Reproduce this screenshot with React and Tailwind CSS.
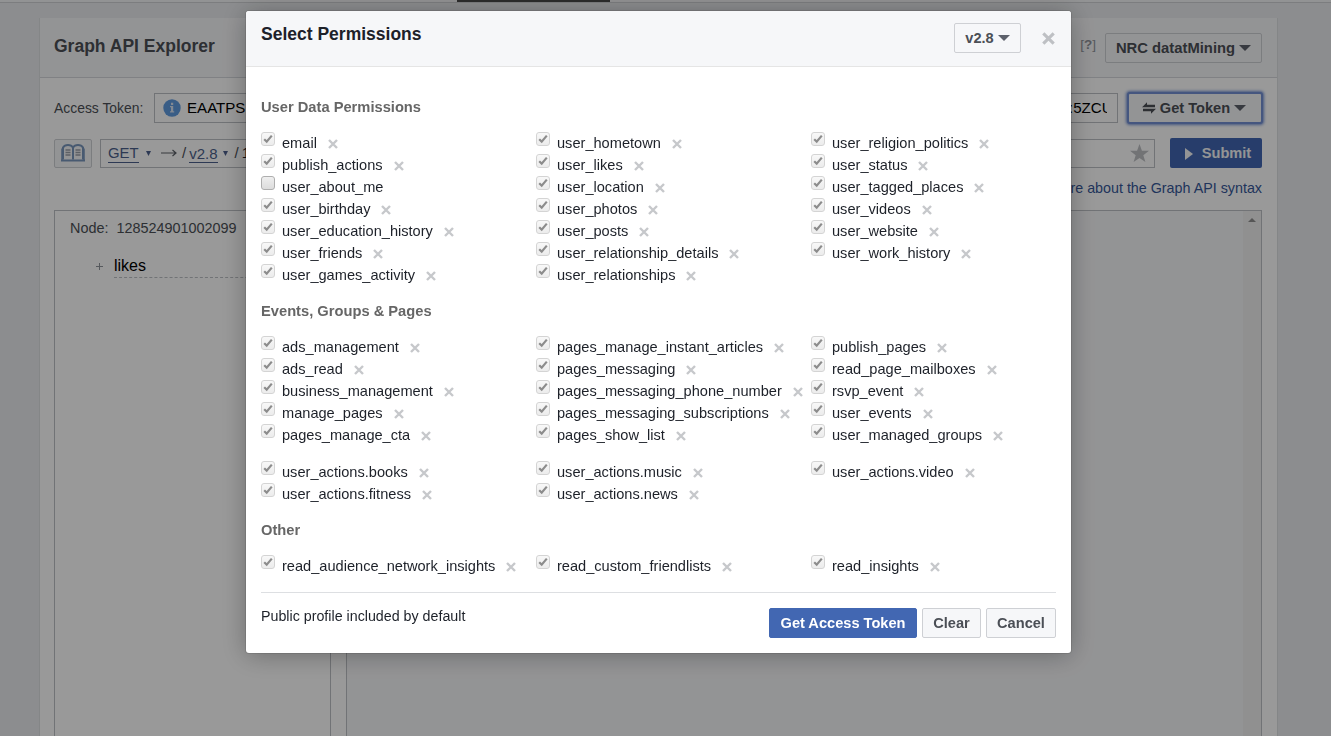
const groups = [
  {
    title: 'User Data Permissions',
    blocks: [
      [
        ['email', 'publish_actions', 'user_about_me', 'user_birthday', 'user_education_history', 'user_friends', 'user_games_activity'],
        ['user_hometown', 'user_likes', 'user_location', 'user_photos', 'user_posts', 'user_relationship_details', 'user_relationships'],
        ['user_religion_politics', 'user_status', 'user_tagged_places', 'user_videos', 'user_website', 'user_work_history'],
      ],
    ],
  },
  {
    title: 'Events, Groups & Pages',
    blocks: [
      [
        ['ads_management', 'ads_read', 'business_management', 'manage_pages', 'pages_manage_cta'],
        ['pages_manage_instant_articles', 'pages_messaging', 'pages_messaging_phone_number', 'pages_messaging_subscriptions', 'pages_show_list'],
        ['publish_pages', 'read_page_mailboxes', 'rsvp_event', 'user_events', 'user_managed_groups'],
      ],
      [
        ['user_actions.books', 'user_actions.fitness'],
        ['user_actions.music', 'user_actions.news'],
        ['user_actions.video'],
      ],
    ],
  },
  {
    title: 'Other',
    blocks: [[['read_audience_network_insights'], ['read_custom_friendlists'], ['read_insights']]],
  },
];

const unchecked = new Set(['user_about_me']);

function Cross({ className }) {
  return (
    <svg viewBox="0 0 10 10" className={className} fill="none" stroke="currentColor" strokeWidth="2.4">
      <path d="M1 1l8 8M9 1l-8 8" />
    </svg>
  );
}

function Caret() {
  return (
    <svg viewBox="0 0 12 6" className="h-1.5 w-3 shrink-0" fill="#5c616b">
      <path d="M0 0h12L6 6z" />
    </svg>
  );
}

function SmallCaret({ className }) {
  return (
    <svg viewBox="0 0 5 5" className={className} fill="currentColor">
      <path d="M0 0h5L2.500 5z" />
    </svg>
  );
}

function Box({ checked }) {
  return checked ? (
    <span className="-mt-2 flex size-3.5 shrink-0 items-center justify-center rounded-[3px] border border-[#d4d4d4] bg-linear-to-b from-[#f8f8f8] to-[#ececec]">
      <svg viewBox="0 0 10 10" className="size-2.5" fill="none" stroke="#8c8c8c" strokeWidth="2.2">
        <path d="M1.200 5.200l2.500 2.400L8.800 1.600" />
      </svg>
    </span>
  ) : (
    <span className="-mt-2 size-3.5 shrink-0 rounded-[3px] border border-[#aeaeae] bg-linear-to-b from-[#efefef] to-[#dcdcdc]" />
  );
}

function Permission({ name }) {
  const checked = !unchecked.has(name);
  return (
    <li className="flex h-[22px] items-center whitespace-nowrap text-[14.6px] text-[#1d2129]">
      <Box checked={checked} />
      <span className="mt-0.5 ml-[7px]">{name}</span>
      {checked && <Cross className="mt-0.5 ml-[11px] size-2.5 text-[#c6c8cb]" />}
    </li>
  );
}

function Dialog() {
  return (
    <div className="fixed inset-0 flex items-start bg-black/40 pt-[11px] pl-[246px]">
      <section className="h-[642px] w-[825px] rounded-[3px] bg-white shadow-[0_2px_26px_rgba(0,0,0,0.3),0_0_0_1px_rgba(0,0,0,0.1)]">
        <header className="flex h-14 justify-between rounded-t-[3px] border-b border-[#e5e5e5] bg-[#f6f7f9] pr-4 pl-[15px]">
          <h2 className="mt-[11px] text-[17.5px] leading-6 font-bold text-[#1d2129]">Select Permissions</h2>
          <div className="flex h-[54px] items-center">
            <button className="flex h-[30px] w-[67px] items-center justify-center gap-1 rounded-[2px] border border-[#ced0d4] bg-[#f6f7f9] text-[14.6px] font-bold text-[#4b4f56]">
              <span className="mt-px">v2.8</span> <Caret />
            </button>
            <Cross className="ml-[21px] size-[13px] text-[#bec0c4]" />
          </div>
        </header>
        <div className="px-[15px] pt-7">
          {groups.map((group, i) => (
            <div key={group.title} className={i ? 'mt-[13px]' : ''}>
              <h3 className="h-6 text-[14.7px] leading-6 font-bold text-[#666]">{group.title}</h3>
              {group.blocks.map((columns, j) => (
                <div key={j} className={j ? 'mt-[15px] grid grid-cols-[275px_275px_245px]' : 'mt-[13px] grid grid-cols-[275px_275px_245px]'}>
                  {columns.map((names) => (
                    <ul key={names[0]}>
                      {names.map((name) => (
                        <Permission key={name} name={name} />
                      ))}
                    </ul>
                  ))}
                </div>
              ))}
            </div>
          ))}
          <footer className="mt-[15px] flex justify-between border-t border-[#dddfe2] pt-[15px]">
            <p className="text-[14.25px] leading-[17px] text-[#1d2129]">Public profile included by default</p>
            <div className="flex gap-[5px] text-[14.6px] font-bold text-[#4b4f56]">
              <button className="h-[30px] w-[148px] rounded-[2px] border border-[#4267b2] bg-[#4267b2] pt-px text-white">Get Access Token</button>
              <button className="h-[30px] w-[59px] rounded-[2px] border border-[#ced0d4] bg-[#f6f7f9] pt-px">Clear</button>
              <button className="h-[30px] w-[70px] rounded-[2px] border border-[#ced0d4] bg-[#f6f7f9] pt-px">Cancel</button>
            </div>
          </footer>
        </div>
      </section>
    </div>
  );
}

export default function App() {
  return (
    <div className="h-[736px] overflow-hidden bg-[#e9ebee] font-['Liberation_Sans',Arial,sans-serif] text-[#4b4f56]">
      <div className="flex h-[3px] border-b border-[#cfd1d4] bg-[#f4f5f7] pl-[457px]">
        <div className="h-0.5 w-[153px] bg-[#4a4a4a]" />
      </div>
      <main className="mt-[15px] ml-[39px] h-[718px] w-[1239px] border-x border-[#dddfe2] bg-white">
        <header className="flex h-[60px] items-center justify-between border-b border-[#d5d8dd] bg-[#f6f7f9] pr-[15px] pl-3.5">
          <h1 className="-mt-[2px] text-[17.5px] font-bold">Graph API Explorer</h1>
          <div className="flex items-center gap-[9px]">
            <span className="-mt-1 text-[13.5px] text-[#90949c]">[<b>?</b>]</span>
            <button className="flex h-[30px] w-[157px] items-center justify-center gap-1 rounded-[2px] border border-[#ced0d4] text-[14.8px] font-bold">
              <span className="mt-px">NRC datatMining</span> <Caret />
            </button>
          </div>
        </header>
        <div className="pr-[15px] pl-3.5">
          <div className="mt-[15px] -mr-px flex h-[30px] items-center">
            <span className="w-[100px] text-[13.9px]">Access Token:</span>
            <div className="flex h-[30px] w-[964px] items-center border border-[#bdc0c5] px-2 text-[15.1px] text-black">
              <svg viewBox="0 0 18 18" className="mr-1.5 size-[18px]">
                <circle cx="9" cy="9" r="8.7" fill="#5f9be0" />
                <path d="M7 7h3.200v5.200h1v1.300H7v-1.300h1V8.300H7zM8 3.700h2.200v2.200H8z" fill="#d9e4f3" />
              </svg>
              <span className="mt-px">EAATPS</span>
              <span className="mt-px mr-0.5 ml-auto w-[38px] overflow-hidden whitespace-nowrap">:5ZCU</span>
            </div>
            <button className="ml-[9px] flex h-8 w-[136px] shrink-0 items-center justify-center gap-1 rounded-[3px] border-2 border-[#7390d4] bg-[#f6f7f9] pr-0.5 text-[14.6px] font-bold shadow-[0_0_3px_1px_#7390d4]">
              <svg viewBox="0 0 14 12" className="h-3 w-3.5" fill="currentColor">
                <path d="M0 5.200L5 .3v2.400h8v2.500zM14 6.800L9 11.700V9.300H1V6.800z" />
              </svg>
              <span className="mt-px">Get Token</span> <Caret />
            </button>
          </div>
          <div className="mt-[15px] flex h-[30px] items-center">
            <div className="flex h-[29px] w-[38px] items-center justify-center rounded-[2px] border border-[#ced0d4] bg-[#f6f7f9]">
              <svg viewBox="0 0 24 18" className="h-[18px] w-6" fill="none" stroke="#7896bd" strokeWidth="2">
                <path d="M12 15.500V3.500C10 .2 4 .2 2 3.500v12" />
                <path d="M12 3.500c2-3.300 8-3.300 10 0v12" />
                <path d="M0 16.500h24" />
                <path d="M1 4.500V16M23 4.500V16" strokeWidth="1.500" />
                <path d="M4.500 6h5M4.500 8.500h5M4.500 11h5M14.500 6h5M14.500 8.500h5M14.500 11h5" strokeWidth="1.500" stroke="#9aa0a8" />
              </svg>
            </div>
            <div className="ml-2 flex h-[29px] w-[1055px] items-center border border-[#bdc0c5] px-[7px] text-[15px] text-[#4c5f8c]">
              <span className="mt-px w-[31px] border-b border-[#4c5f8c] text-[14.9px] leading-[17px]">GET</span>
              <SmallCaret className="ml-[7px] size-[5px]" />
              <svg viewBox="0 0 16 8" className="ml-[10px] h-2 w-4" fill="none" stroke="#5c6068" strokeWidth="1.200">
                <path d="M0 4h15M11.500 1L15 4l-3.500 3" />
              </svg>
              <span className="ml-[5px] text-[#4b4f56]">/</span>
              <span className="mt-px ml-[3px] border-b border-[#4c5f8c] leading-[17px]">v2.8</span>
              <SmallCaret className="ml-[5px] size-[5px]" />
              <span className="ml-[7px] text-[#4b4f56]">/</span>
              <span className="ml-[3px] text-[#1d2129]">1</span>
              <svg viewBox="0 0 18 18" className="-mr-0.5 ml-auto size-[19px] text-[#bec0c4]" fill="currentColor">
                <path d="M9 0l2.300 6.500H18l-5.400 4.100L14.600 17 9 13.200 3.400 17l2-6.400L0 6.500h6.700z" />
              </svg>
            </div>
            <button className="ml-[15px] flex h-[30px] w-[92px] items-center justify-center gap-[9px] rounded-[2px] bg-[#4267b2] pl-1 text-[14.6px] font-bold text-[#f6f7f9]">
              <svg viewBox="0 0 8 12" className="mt-0.5 h-3 w-2" fill="currentColor">
                <path d="M0 0l8 6-8 6z" />
              </svg>
              <span className="mt-px">Submit</span>
            </button>
          </div>
          <p className="mt-2.5 text-right text-[14.3px] leading-5 text-[#365899]">Learn more about the Graph API syntax</p>
          <div className="mt-3 flex h-[540px] justify-between">
            <div className="w-[277px] border border-[#bdc0c5] pt-[7px] pl-[15px]">
              <p className="text-[14.4px] leading-5">Node:&nbsp; 128524901002099</p>
              <div className="mt-4 ml-[25px] flex items-center gap-2.5">
                <svg viewBox="0 0 9 9" className="size-[9px]" stroke="#90949c">
                  <path d="M1 4.500h7M4.500 1v7" />
                </svg>
                <span className="w-[200px] border-b border-dashed border-[#bdc0c5] text-[16px] leading-[23px] text-black">likes</span>
              </div>
            </div>
            <div className="flex w-[916px] justify-end border border-[#bdc0c5] bg-[#f6f7f9]">
              <div className="flex w-[18px] justify-center bg-[#f1f1f1] pt-[7px]">
                <svg viewBox="0 0 8 4" className="h-1 w-2" fill="#909090">
                  <path d="M4 0l4 4H0z" />
                </svg>
              </div>
            </div>
          </div>
        </div>
      </main>
      <Dialog />
    </div>
  );
}
